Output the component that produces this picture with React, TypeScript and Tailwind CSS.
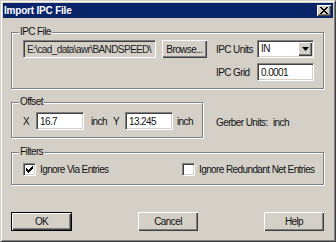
import React from "react";

const font = "font-['Liberation_Sans',Arial,sans-serif]";

function GroupBox({
  label,
  className,
  children,
}: {
  label: string;
  className?: string;
  children: React.ReactNode;
}) {
  return (
    <div
      className={`relative border border-[#808080] shadow-[1px_1px_0_#fff,inset_1px_1px_0_#fff] ${className ?? ""}`}
    >
      <span className="absolute left-[7px] top-[-7px] bg-[#d4d0c8] px-[1px] leading-[12px]">
        {label}
      </span>
      {children}
    </div>
  );
}

function Field({
  value,
  className,
  disabled,
}: {
  value: string;
  className?: string;
  disabled?: boolean;
}) {
  return (
    <div
      className={`h-[18px] border border-t-[#808080] border-l-[#808080] border-r-white border-b-white shadow-[inset_1px_1px_0_#404040,inset_-1px_-1px_0_#d4d0c8] pl-[3px] pt-[2px] leading-[13px] overflow-hidden whitespace-nowrap ${
        disabled ? "bg-[#d4d0c8]" : "bg-white"
      } ${className ?? ""}`}
    >
      {value}
    </div>
  );
}

function Button({
  label,
  isDefault,
  className,
}: {
  label: string;
  isDefault?: boolean;
  className?: string;
}) {
  return (
    <div
      className={`flex items-center justify-center bg-[#d4d0c8] ${
        isDefault
          ? "border border-black shadow-[inset_1px_1px_0_#fff,inset_-1px_-1px_0_#404040,inset_-2px_-2px_0_#808080]"
          : "shadow-[inset_1px_1px_0_#fff,inset_-1px_-1px_0_#404040,inset_-2px_-2px_0_#808080]"
      } ${className ?? ""}`}
    >
      {label}
    </div>
  );
}

function CheckBox({ checked, label }: { checked: boolean; label: string }) {
  return (
    <div className="flex items-center gap-[4px]">
      <div className="w-[13px] h-[13px] bg-white border border-t-[#808080] border-l-[#808080] border-r-white border-b-white shadow-[inset_1px_1px_0_#404040,inset_-1px_-1px_0_#d4d0c8] flex items-center justify-center">
        {checked && (
          <svg width="7" height="7" viewBox="0 0 7 7">
            <path
              d="M0 2h1v1h1v1h1v-1h1v-1h1v-1h1v-1h1v3h-1v1h-1v1h-1v1h-1v1h-1v-1h-1v-1h-1z"
              fill="#000"
            />
          </svg>
        )}
      </div>
      <span>{label}</span>
    </div>
  );
}

export default function App() {
  return (
    <div
      className={`${font} text-[10px] tracking-[-0.6px] text-[#111] w-[336px] h-[242px] bg-[#d4d0c8] border border-t-[#d4d0c8] border-l-[#d4d0c8] border-r-[#404040] border-b-[#404040] shadow-[inset_1px_1px_0_#fff,inset_-1px_-1px_0_#808080] p-[2px] flex flex-col`}
    >
      {/* title bar */}
      <div className="h-[15px] bg-[#0a246a] flex items-center justify-between pl-[1px] pr-[2px]">
        <span className="text-white font-bold text-[10px] tracking-[-0.2px]">
          Import IPC File
        </span>
        <div className="w-[14px] h-[11px] bg-[#d4d0c8] shadow-[inset_1px_1px_0_#fff,inset_-1px_-1px_0_#404040,inset_-2px_-2px_0_#808080] flex items-center justify-center">
          <svg width="8" height="7" viewBox="0 0 8 7">
            <path
              d="M0 0h2v1h1v1h2v-1h1v-1h2v1h-1v1h-1v1h-1v1h1v1h1v1h1v1h-2v-1h-1v-1h-2v1h-1v1h-2v-1h1v-1h1v-1h1v-1h-1v-1h-1v-1h-1z"
              fill="#000"
            />
          </svg>
        </div>
      </div>

      <div className="flex-1 flex flex-col pl-[8px] pr-[9px] pt-[14px]">
        {/* IPC File */}
        <GroupBox label="IPC File" className="h-[57px]">
          <div className="flex pl-[11px] pt-[7px]">
            <Field
              value="E:\cad_data\awr\BANDSPEED\"
              disabled
              className="w-[133px] text-[#222]"
            />
            <Button label="Browse..." className="w-[45px] h-[18px] ml-[6px]" />
            <div className="ml-[9px] grid grid-cols-[41px_57px] gap-y-[5px] items-center">
              <span>IPC Units</span>
              <div className="h-[18px] bg-white border border-t-[#808080] border-l-[#808080] border-r-white border-b-white shadow-[inset_1px_1px_0_#404040,inset_-1px_-1px_0_#d4d0c8] flex items-stretch p-[1px]">
                <span className="flex-1 pl-[2px] leading-[14px]">IN</span>
                <div className="w-[14px] bg-[#d4d0c8] shadow-[inset_1px_1px_0_#fff,inset_-1px_-1px_0_#404040,inset_-2px_-2px_0_#808080] flex items-center justify-center">
                  <svg width="7" height="4" viewBox="0 0 7 4">
                    <path d="M0 0h7l-3.5 4z" fill="#000" />
                  </svg>
                </div>
              </div>
              <span>IPC Grid</span>
              <Field value="0.0001" />
            </div>
          </div>
        </GroupBox>

        {/* Offset */}
        <div className="flex items-start mt-[13px]">
          <GroupBox label="Offset" className="w-[192px] h-[36px]">
            <div className="flex items-center pl-[11px] pt-[9px]">
              <span className="w-[13px]">X</span>
              <Field value="16.7" className="w-[48px]" />
              <span className="ml-[7px] w-[22px]">inch</span>
              <span className="w-[12px]">Y</span>
              <Field value="13.245" className="w-[48px]" />
              <span className="ml-[4px]">inch</span>
            </div>
          </GroupBox>
          <div className="ml-[13px] mt-[13px] flex">
            <span className="w-[57px]">Gerber Units:</span>
            <span>inch</span>
          </div>
        </div>

        {/* Filters */}
        <GroupBox label="Filters" className="h-[33px] mt-[14px]">
          <div className="flex pl-[11px] pt-[9px]">
            <div className="w-[159px]">
              <CheckBox checked label="Ignore Via Entries" />
            </div>
            <CheckBox checked={false} label="Ignore Redundant Net Entries" />
          </div>
        </GroupBox>

        {/* buttons */}
        <div className="flex justify-between mt-[27px]">
          <Button label="OK" isDefault className="w-[61px] h-[19px]" />
          <Button label="Cancel" className="w-[60px] h-[19px]" />
          <Button label="Help" className="w-[60px] h-[19px]" />
        </div>
      </div>
    </div>
  );
}
